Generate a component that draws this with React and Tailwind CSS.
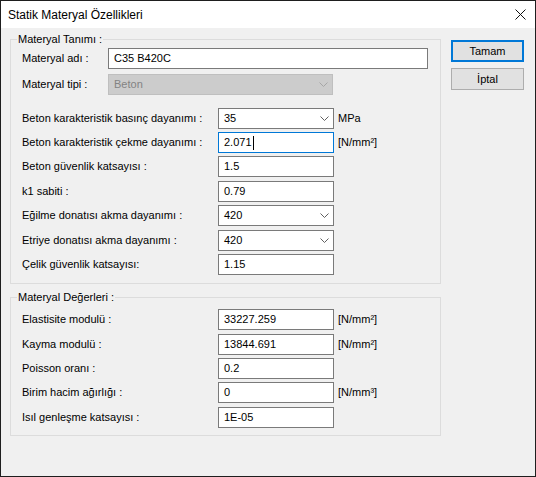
import clsx from "clsx";

function Chevron({ disabled }) {
	return (
		<svg width="9" height="5" viewBox="0 0 9 5" className="shrink-0">
			<path d="M0.5 0.5 L4.5 4.5 L8.5 0.5" fill="none" stroke={disabled ? "#a6a6a6" : "#606060"} strokeWidth="1" />
		</svg>
	);
}

function Box({ children, combo, focused, disabled, className }) {
	return (
		<div
			className={clsx(
				"flex h-[21px] shrink-0 items-center border pl-[5px] pr-[4px]",
				disabled
					? "border-[#bfbfbf] bg-[#cccccc] text-[#838383]"
					: focused
						? "border-[#0078d7] bg-white text-black"
						: "border-[#7a7a7a] bg-white text-black",
				className
			)}
		>
			<span className="flex flex-1 items-center leading-none">
				{children}
				{focused && <span className="ml-[1px] inline-block h-[14px] w-px bg-black" />}
			</span>
			{combo && <Chevron disabled={disabled} />}
		</div>
	);
}

function Row({ label, value, unit, combo, focused, className }) {
	return (
		<div className={clsx("flex items-center", className)}>
			<span className="w-[196px] shrink-0">{label}</span>
			<Box combo={combo} focused={focused} className="w-[116px]">
				{value}
			</Box>
			{unit && <span className="ml-[4px]">{unit}</span>}
		</div>
	);
}

function Group({ title, className, children }) {
	return (
		<fieldset className={clsx("border border-[#dcdcdc] p-0", className)}>
			<legend className="ml-[6px] px-[1px] leading-[15px]">{title}</legend>
			{children}
		</fieldset>
	);
}

export default function App() {
	return (
		<div className="flex h-[477px] w-[536px] flex-col border border-[#1e1e1e] bg-[#f0f0f0] font-['Liberation_Sans',Arial,sans-serif] text-[11px] text-black">
			<div className="flex h-[27px] shrink-0 items-center justify-between bg-white pl-[7px] pr-[9px]">
				<span className="text-[12px] leading-none">Statik Materyal Özellikleri</span>
				<svg width="11" height="11" viewBox="0 0 11 11">
					<path d="M0.5 0.5 L10.5 10.5 M10.5 0.5 L0.5 10.5" stroke="#111" strokeWidth="1" />
				</svg>
			</div>

			<div className="flex flex-1 pl-[9px] pt-[4px]">
				<div className="flex w-[431px] flex-col gap-[6px]">
					<Group title="Materyal Tanımı :" className="h-[252px]">
						<div className="flex flex-col pl-[11px] pt-[1px]">
							<div className="flex items-center">
								<span className="w-[86px] shrink-0">Materyal adı :</span>
								<Box className="w-[320px]">C35 B420C</Box>
							</div>
							<div className="mt-[5px] flex items-center">
								<span className="w-[86px] shrink-0">Materyal tipi :</span>
								<Box combo disabled className="w-[225px]">
									Beton
								</Box>
							</div>
							<div className="mt-[13px] flex flex-col gap-[3px]">
								<Row label="Beton karakteristik basınç dayanımı :" value="35" combo unit="MPa" />
								<Row label="Beton karakteristik çekme dayanımı :" value="2.071" focused unit="[N/mm²]" />
								<Row label="Beton güvenlik katsayısı :" value="1.5" />
								<Row label="k1 sabiti :" value="0.79" className="mt-[1px]" />
								<Row label="Eğilme donatısı akma dayanımı :" value="420" combo />
								<Row label="Etriye donatısı akma dayanımı :" value="420" combo className="mt-[1px]" />
								<Row label="Çelik güvenlik katsayısı:" value="1.15" />
							</div>
						</div>
					</Group>

					<Group title="Materyal Değerleri :" className="h-[146px]">
						<div className="flex flex-col gap-[3px] pl-[11px] pt-[4px]">
							<Row label="Elastisite modulü :" value="33227.259" unit="[N/mm²]" />
							<Row label="Kayma modulü :" value="13844.691" unit="[N/mm²]" className="mt-[1px]" />
							<Row label="Poisson oranı :" value="0.2" />
							<Row label="Birim hacim ağırlığı :" value="0" unit="[N/mm³]" />
							<Row label="Isıl genleşme katsayısı :" value="1E-05" className="mt-[1px]" />
						</div>
					</Group>
				</div>

				<div className="ml-[10px] mt-[8px] flex flex-col gap-[6px]">
					<button className="flex h-[22px] w-[73px] items-center justify-center border-2 border-[#0078d7] bg-[#e1e1e1] leading-none">
						Tamam
					</button>
					<button className="flex h-[22px] w-[73px] items-center justify-center border border-[#adadad] bg-[#e1e1e1] leading-none">
						İptal
					</button>
				</div>
			</div>
		</div>
	);
}
